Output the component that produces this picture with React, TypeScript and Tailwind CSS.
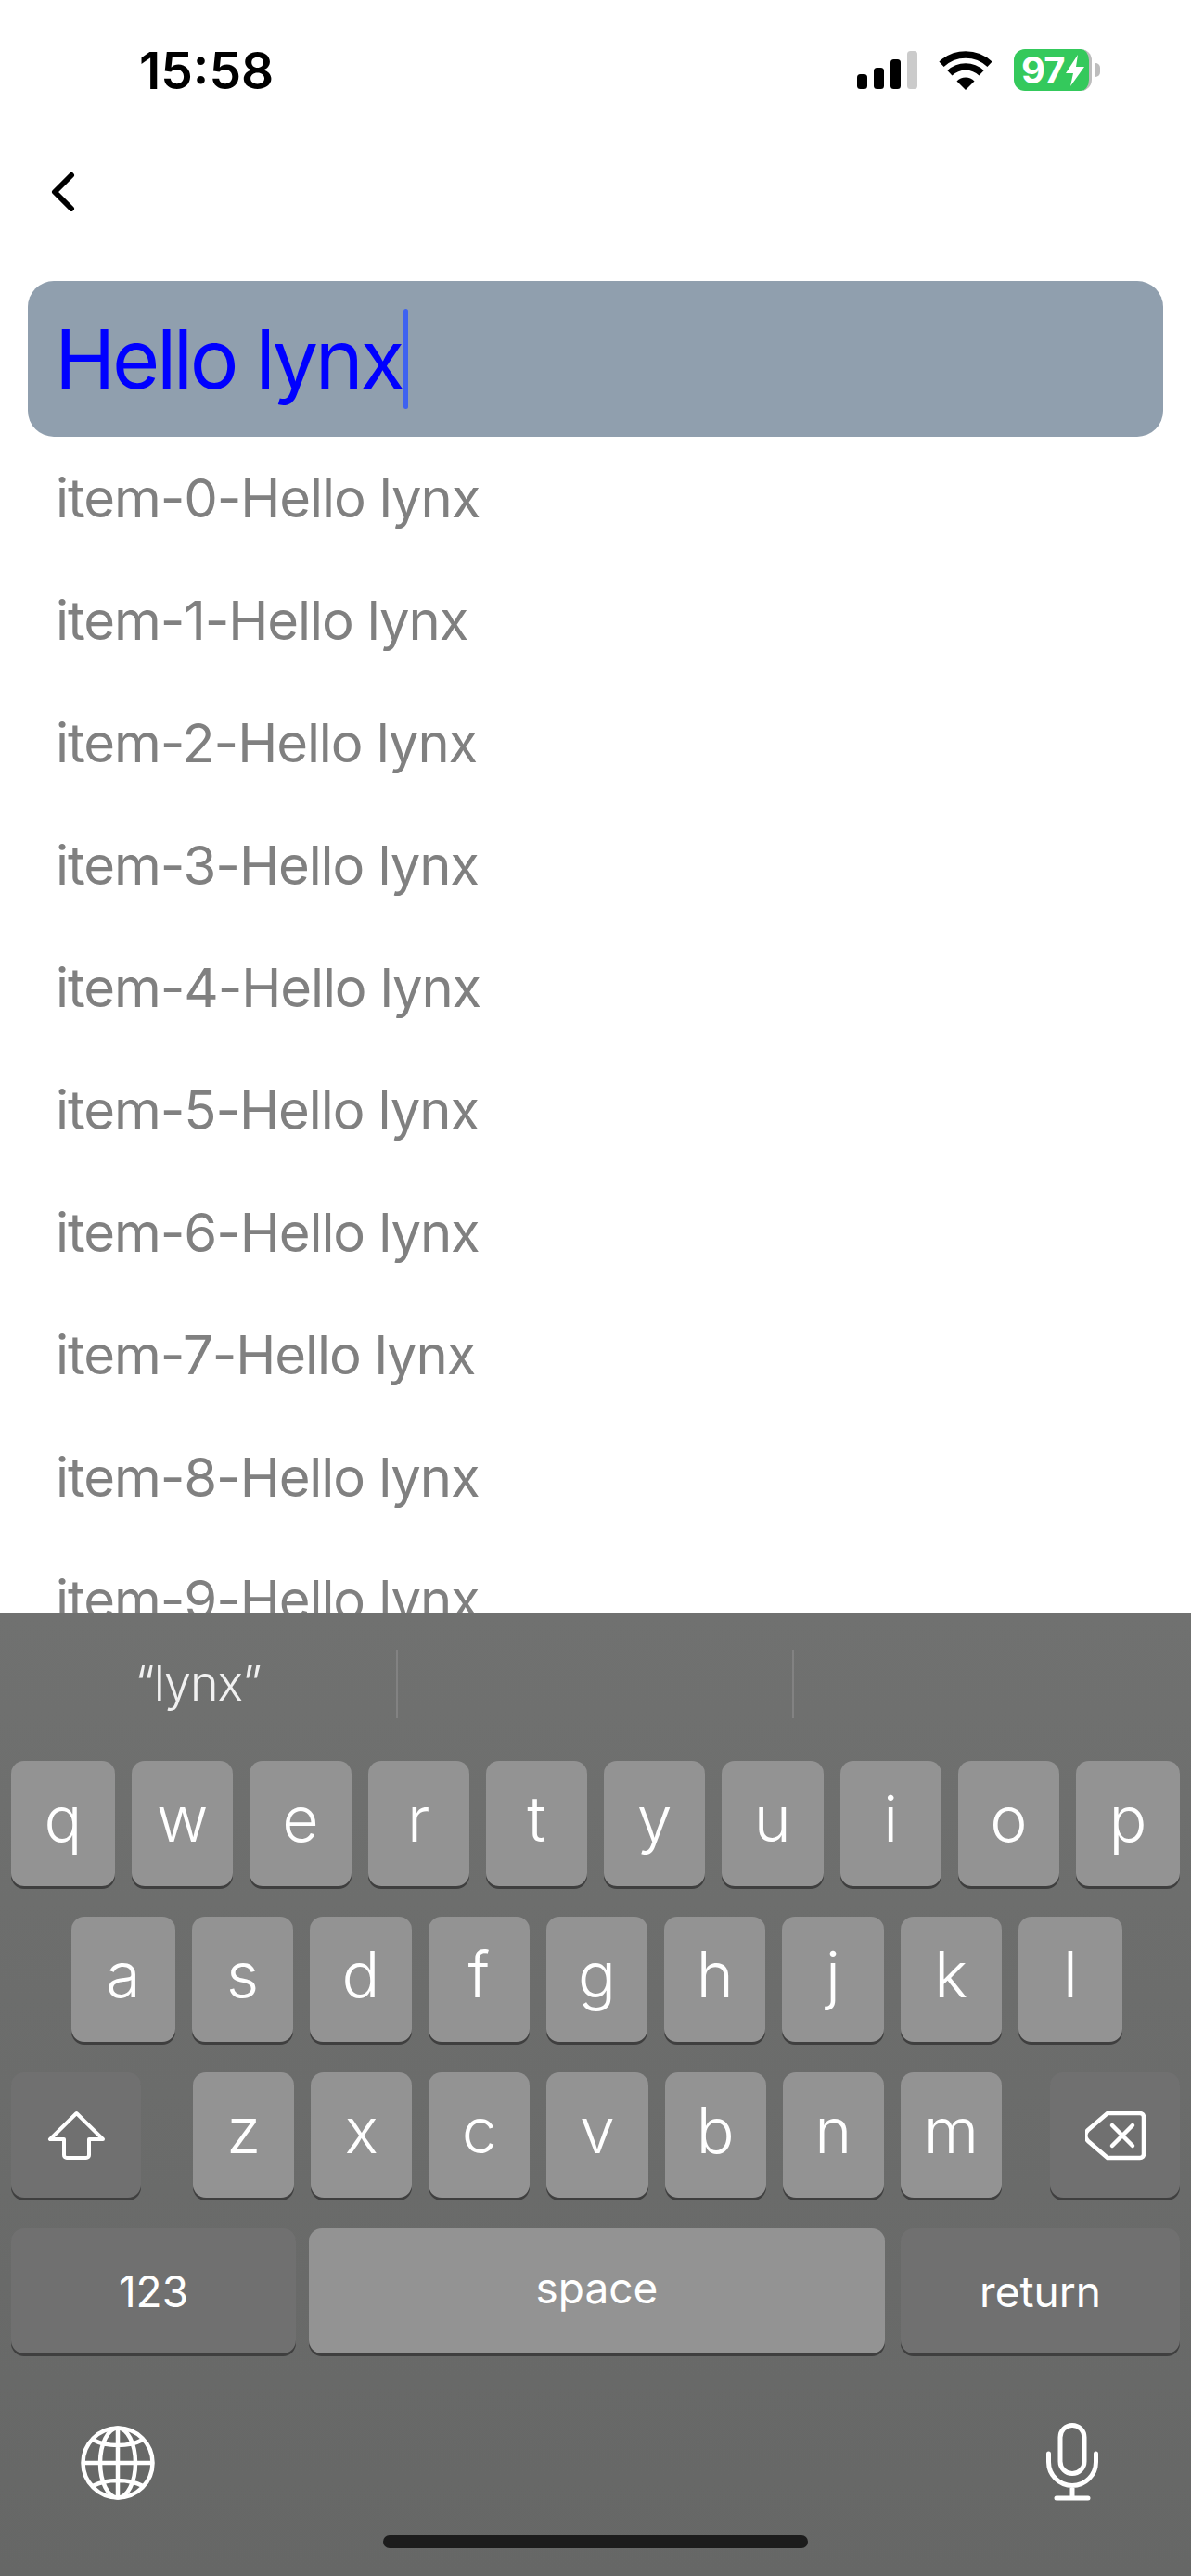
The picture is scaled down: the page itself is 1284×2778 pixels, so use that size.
const items = [0, 1, 2, 3, 4, 5, 6, 7, 8, 9];

function SignalIcon() {
    return (
        <svg className="w-[65px] h-[41px]" viewBox="0 0 65 41">
            <rect x="0" y="25" width="11" height="16" rx="3.5" fill="#000" />
            <rect x="18" y="18" width="11" height="23" rx="3.5" fill="#000" />
            <rect x="36" y="9" width="11" height="32" rx="3.5" fill="#000" />
            <rect x="54" y="0" width="11" height="41" rx="3.5" fill="#cbcbcb" />
        </svg>
    );
}

function WifiIcon() {
    return (
        <svg className="w-[58px] h-[42px]" viewBox="0 0 58 42" fill="none">
            <path d="M3 14.2A38 38 0 0 1 55 14.2" stroke="#000" strokeWidth="7.5" />
            <path d="M11.9 23.7A25 25 0 0 1 46.1 23.7" stroke="#000" strokeWidth="7.5" />
            <path d="M29 42L19.5 32.5A13.5 13.5 0 0 1 38.5 32.5Z" fill="#000" />
        </svg>
    );
}

function Battery() {
    return (
        <div className="flex items-center">
            <div className="w-[84px] h-[45px] rounded-[12px] bg-[#34c95c] border-r-[3px] border-[#bdbdbd] flex items-center pl-[8px] gap-[1px]">
                <span className="text-white text-[40px] leading-none font-bold tracking-[-1px]">97</span>
                <svg className="w-[22px] h-[36px]" viewBox="0 0 22 36">
                    <path d="M14 1L1 21h8L6 35l15-21h-9z" fill="#fff" />
                </svg>
            </div>
            <div className="w-[5px] h-[15px] ml-[4px] rounded-r-full bg-[#bdbdbd]" />
        </div>
    );
}

function Key({ label, className }: { label: string; className: string }) {
    return (
        <div className={`h-[135px] rounded-[14px] bg-[#939393] shadow-[0_3px_0_#3f3f3f] flex items-center justify-center text-white text-[68px] font-light leading-none pb-[12px] ${className}`}>
            {label}
        </div>
    );
}

function ActionKey({ children, className }: { children: React.ReactNode; className: string }) {
    return (
        <div className={`h-[135px] rounded-[14px] bg-[#707070] shadow-[0_3px_0_#3f3f3f] flex items-center justify-center text-white text-[46px] leading-none ${className}`}>
            {children}
        </div>
    );
}

export default function App() {
    return (
        <div className="w-[1284px] h-[2778px] flex flex-col overflow-hidden bg-white font-[Inter,sans-serif]">
            {/* Status bar */}
            <div className="h-[98px] pt-[55px] pl-[150px] pr-[98px] flex items-center justify-between shrink-0">
                <span className="text-[55px] leading-none font-semibold text-black">15:58</span>
                <div className="flex items-center gap-[23px] -mt-[2px]">
                    <SignalIcon />
                    <WifiIcon />
                    <Battery />
                </div>
            </div>

            {/* Nav */}
            <div className="mt-[88px] pl-[55px] shrink-0">
                <svg className="w-[26px] h-[42px] block" viewBox="0 0 26 42" fill="none">
                    <path d="M22 3L4 21l18 18" stroke="#000" strokeWidth="6" strokeLinecap="round" strokeLinejoin="round" />
                </svg>
            </div>

            {/* Input */}
            <div className="mt-[75px] mx-[30px] h-[168px] shrink-0 rounded-[28px] bg-[#909fae] flex items-center pl-[29px]">
                <span className="text-[88px] leading-none text-[#0000ff] tracking-[-3.4px]">Hello lynx</span>
                <div className="w-[5px] h-[108px] rounded-full bg-[#3f62f0] ml-[2px]" />
            </div>

            {/* List */}
            <div className="flex-1 overflow-hidden pl-[60px] min-h-0">
                {items.map((i) => (
                    <div key={i} className="h-[132px] flex items-center text-[58px] leading-none text-[#808080] tracking-[-1.1px]">
                        item-{i}-Hello lynx
                    </div>
                ))}
            </div>

            {/* Keyboard */}
            <div className="h-[1038px] shrink-0 bg-gradient-to-b from-[#707170] to-[#666766]">
                <div className="h-[159px] pt-[39px] flex items-start">
                    <div className="w-[427px] h-[74px] flex items-center justify-center text-white/90 text-[52px] font-light leading-none tracking-[-1px]">“lynx”</div>
                    <div className="w-[2px] h-[74px] bg-[#828282]" />
                    <div className="w-[425px] h-[74px]" />
                    <div className="w-[2px] h-[74px] bg-[#828282]" />
                </div>

                <div className="flex flex-col gap-[33px]">
                    <div className="flex gap-[18px] px-[12px]">
                        <Key label="q" className="w-[112px]" />
                        {['w', 'e', 'r', 't', 'y', 'u', 'i', 'o'].map((k) => (
                            <Key key={k} label={k} className="flex-1" />
                        ))}
                        <Key label="p" className="w-[112px]" />
                    </div>

                    <div className="flex gap-[18px] pl-[77px] pr-[74px]">
                        <Key label="a" className="w-[112px]" />
                        {['s', 'd', 'f', 'g', 'h', 'j', 'k'].map((k) => (
                            <Key key={k} label={k} className="flex-1" />
                        ))}
                        <Key label="l" className="w-[112px]" />
                    </div>

                    <div className="flex px-[12px]">
                        <ActionKey className="w-[140px]">
                            <svg className="w-[63px] h-[54px]" viewBox="0 0 63 54" fill="none">
                                <path d="M31.500 3L3 31h15v17a3 3 0 0 0 3 3h21a3 3 0 0 0 3-3V31h15z" stroke="#fff" strokeWidth="4" strokeLinejoin="round" />
                            </svg>
                        </ActionKey>
                        <div className="flex-1 flex gap-[18px] ml-[56px] mr-[52px]">
                            {['z', 'x', 'c', 'v', 'b', 'n', 'm'].map((k) => (
                                <Key key={k} label={k} className="flex-1" />
                            ))}
                        </div>
                        <ActionKey className="w-[140px]">
                            <svg className="w-[65px] h-[54px]" viewBox="0 0 65 54" fill="none">
                                <path d="M24 3h35a4 4 0 0 1 4 4v40a4 4 0 0 1-4 4H24L3 33a8 8 0 0 1 0-12z" stroke="#fff" strokeWidth="4.5" strokeLinejoin="round" />
                                <path d="M29 16l22 22M51 16L29 38" stroke="#fff" strokeWidth="4.5" strokeLinecap="round" />
                            </svg>
                        </ActionKey>
                    </div>

                    <div className="flex gap-[14px] px-[12px]">
                        <ActionKey className="w-[307px]">123</ActionKey>
                        <div className="flex-1 h-[135px] mr-[3px] rounded-[14px] bg-[#939393] shadow-[0_3px_0_#3f3f3f] flex items-center justify-center text-white text-[46px] leading-none pb-[8px]">
                            space
                        </div>
                        <ActionKey className="w-[301px]">return</ActionKey>
                    </div>
                </div>

                {/* Globe and mic */}
                <div className="mt-[75px] pl-[87px] pr-[100px] flex items-start justify-between">
                    <svg className="w-[80px] h-[80px] mt-[3px]" viewBox="0 0 80 80" fill="none" stroke="#fff" strokeWidth="4.5">
                        <circle cx="40" cy="40" r="37.500" />
                        <ellipse cx="40" cy="40" rx="19" ry="37.500" />
                        <path d="M40 2.500v75M2.500 40h75M13 15c15 8 39 8 54 0M13 65c15-8 39-8 54 0" />
                    </svg>
                    <svg className="w-[56px] h-[84px]" viewBox="0 0 56 84" fill="none" stroke="#fff" strokeWidth="5" strokeLinecap="round">
                        <rect x="15" y="2.500" width="26" height="52" rx="13" />
                        <path d="M2.500 33v9a25.500 25.500 0 0 0 51 0v-9M28 68v13M11 81h34" />
                    </svg>
                </div>

                <div className="mt-[37px] mx-auto w-[458px] h-[14px] rounded-full bg-[#1c1c1c]" />
            </div>
        </div>
    );
}
